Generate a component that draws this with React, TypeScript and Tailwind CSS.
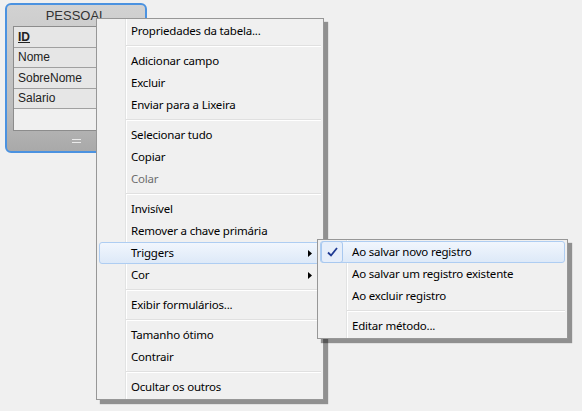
import React from 'react';

type Entry = { label?: string; sep?: boolean; disabled?: boolean; arrow?: boolean; active?: boolean; checked?: boolean };

const mainMenu: Entry[] = [
  { label: 'Propriedades da tabela...' },
  { sep: true },
  { label: 'Adicionar campo' },
  { label: 'Excluir' },
  { label: 'Enviar para a Lixeira' },
  { sep: true },
  { label: 'Selecionar tudo' },
  { label: 'Copiar' },
  { label: 'Colar', disabled: true },
  { sep: true },
  { label: 'Invisível' },
  { label: 'Remover a chave primária' },
  { label: 'Triggers', arrow: true, active: true },
  { label: 'Cor', arrow: true },
  { sep: true },
  { label: 'Exibir formulários...' },
  { sep: true },
  { label: 'Tamanho ótimo' },
  { label: 'Contrair' },
  { sep: true },
  { label: 'Ocultar os outros' },
];

const subMenu: Entry[] = [
  { label: 'Ao salvar novo registro', active: true, checked: true },
  { label: 'Ao salvar um registro existente' },
  { label: 'Ao excluir registro' },
  { sep: true },
  { label: 'Editar método...' },
];

const fields = [
  { name: 'ID', key: true },
  { name: 'Nome' },
  { name: 'SobreNome' },
  { name: 'Salario' },
];

const Arrow = () => (
  <svg width="4" height="7" viewBox="0 0 4 7" className="absolute right-[11px] top-[8px]">
    <path d="M0 0 L4 3.5 L0 7 Z" fill="#000" />
  </svg>
);

const Check = () => (
  <div className="absolute left-[3px] top-0 h-[22px] w-[22px] rounded-[3px] border border-[#a8c8ef] bg-[#e6eefa] flex items-center justify-center">
    <svg width="11" height="10" viewBox="0 0 11 10">
      <path d="M1 5.5 L4 8.5 L10 1" fill="none" stroke="#1f3a93" strokeWidth="1.8" />
    </svg>
  </div>
);

const Menu = ({ items, className }: { items: Entry[]; className: string }) => (
  <div className={`absolute border border-[#979797] bg-[#f0f0f0] py-[1px] shadow-[4px_4px_1px_rgba(0,0,0,0.4)] ${className}`}>
    {/* gutter line */}
    <div className="absolute left-[28px] top-0 bottom-0 w-[2px] border-l border-[#e2e3e3] bg-white" />
    {items.map((it, i) =>
      it.sep ? (
        <div key={i} className="relative h-[8px] pl-[29px] pr-[2px] flex flex-col justify-center">
          <div className="h-[1px] bg-[#e0e0e0]" />
          <div className="h-[1px] bg-white" />
        </div>
      ) : (
        <div key={i} className="relative h-[22px]">
          {it.active && (
            <div className="absolute left-[2px] right-[2px] top-0 bottom-0 rounded-[3px] border border-[#aecdf2] bg-[linear-gradient(#f1f6fd,#dde9f8)]" />
          )}
          {it.checked && <Check />}
          <div
            className={`relative h-[22px] flex items-center pl-[34px] pr-[24px] whitespace-nowrap text-[11.5px] tracking-[-0.2px] ${
              it.disabled ? 'text-[#6d6d6d]' : 'text-black'
            }`}
          >
            {it.label}
          </div>
          {it.arrow && <Arrow />}
        </div>
      ),
    )}
  </div>
);

export default function App() {
  return (
    <div className="relative w-[582px] h-[411px] bg-[#f0f0f0] overflow-hidden font-['Noto_Sans','Open_Sans',sans-serif]">
      {/* table card */}
      <div className="ml-[5px] pt-[3px]">
        <div className="w-[142px] h-[150px] rounded-[6px] border-2 border-[#4b92e0] bg-[linear-gradient(#d2d2d2,#bcbcbc_70%,#a9a9a9)] flex flex-col px-[6px] font-['Liberation_Sans',Arial,sans-serif]">
          <div className="h-[21px] flex items-center justify-center text-[13px] text-[#333]">PESSOAL</div>
          <div className="border border-[#8c8c8c] bg-[#e6e6e6]">
            {fields.map((f) => (
              <div
                key={f.name}
                className={`h-[20.5px] border-b border-[#a0a0a0] px-[4px] flex items-center text-[12px] text-[#222] ${
                  f.key ? 'font-bold underline' : ''
                }`}
              >
                {f.name}
              </div>
            ))}
            <div className="h-[21px] bg-[#f0f0f0]" />
          </div>
          <div className="flex-1 flex items-center justify-center">
            <div className="flex flex-col gap-[2px]">
              <div className="h-[1px] w-[9px] bg-[#eaeaea]" />
              <div className="h-[1px] w-[9px] bg-[#eaeaea]" />
            </div>
          </div>
        </div>
      </div>

      <Menu items={mainMenu} className="left-[96px] top-[18px] w-[228px]" />
      <Menu items={subMenu} className="left-[317px] top-[239px] w-[251px]" />
    </div>
  );
}
